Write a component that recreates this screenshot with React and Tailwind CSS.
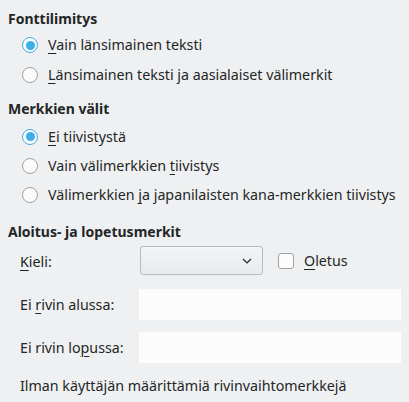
import React from 'react';

const U = ({ children }) => <span className="underline underline-offset-[3px] decoration-1">{children}</span>;

const Radio = ({ checked, children }) => (
    <div className="flex items-center h-full pl-[22px] gap-[10px]">
        {checked ? (
            <span className="h-4 w-4 rounded-full border-[1.5px] border-[#3daee9] bg-[#fcfcfc] flex items-center justify-center flex-shrink-0">
                <span className="h-[9px] w-[9px] rounded-full bg-[#3daee9]" />
            </span>
        ) : (
            <span className="h-4 w-4 rounded-full border border-[#9fa2a4] bg-[#fcfcfc] flex-shrink-0" />
        )}
        <span>{children}</span>
    </div>
);

const Heading = ({ children, className }) => (
    <div className={`h-5 flex items-center pl-2 font-bold text-[14px] ${className}`}>{children}</div>
);

export default function App() {
    return (
        <div className="w-[409px] h-[402px] overflow-hidden bg-[#eff0f1] text-[#232627] text-[14.25px] pt-2 font-['Noto_Sans','Open_Sans',sans-serif]">
            {/* Fonttilimitys */}
            <Heading>Fonttilimitys</Heading>
            <div className="mt-[2px] h-[30px]"><Radio checked><U>V</U>ain länsimainen teksti</Radio></div>
            <div className="h-[30px]"><Radio><U>L</U>änsimainen teksti ja aasialaiset välimerkit</Radio></div>

            {/* Merkkien välit */}
            <Heading className="mt-2">Merkkien välit</Heading>
            <div className="mt-1 h-[29px]"><Radio checked><U>E</U>i tiivistystä</Radio></div>
            <div className="h-[29px]"><Radio>Vain välimerkkien <U>t</U>iivistys</Radio></div>
            <div className="h-[29px]"><Radio>Välimerkkien <U>j</U>a japanilaisten kana-merkkien tiivistys</Radio></div>

            {/* Aloitus- ja lopetusmerkit */}
            <Heading className="mt-3">Aloitus- ja lopetusmerkit</Heading>
            <div className="mt-[5px] h-[29px] flex items-center">
                <span className="w-[140px] pl-5 pt-[2px]"><U>K</U>ieli:</span>
                <div className="w-[123px] h-full rounded-[3px] border border-[#b9bbbd] bg-gradient-to-b from-[#f3f4f5] to-[#e9eaeb] flex items-center justify-end pr-[10px]">
                    <svg width="10" height="6" viewBox="0 0 10 6" fill="none">
                        <path d="M1 1l4 4 4-4" stroke="#232627" strokeWidth="1.2" />
                    </svg>
                </div>
                <span className="ml-[15px] h-4 w-4 rounded-[3px] border border-[#9fa2a4] bg-[#fcfcfc]" />
                <span className="ml-[10px]"><U>O</U>letus</span>
            </div>
            <div className="mt-[14px] h-[31px] flex items-center">
                <span className="w-[139px] pl-5">Ei <U>r</U>ivin alussa:</span>
                <div className="w-[262px] h-full bg-[#fcfcfc]" />
            </div>
            <div className="mt-3 h-[31px] flex items-center">
                <span className="w-[139px] pl-5">Ei rivin lo<U>p</U>ussa:</span>
                <div className="w-[262px] h-full bg-[#fcfcfc]" />
            </div>
            <div className="mt-[13px] h-5 flex items-center pl-5">Ilman käyttäjän määrittämiä rivinvaihtomerkkejä</div>
        </div>
    );
}
